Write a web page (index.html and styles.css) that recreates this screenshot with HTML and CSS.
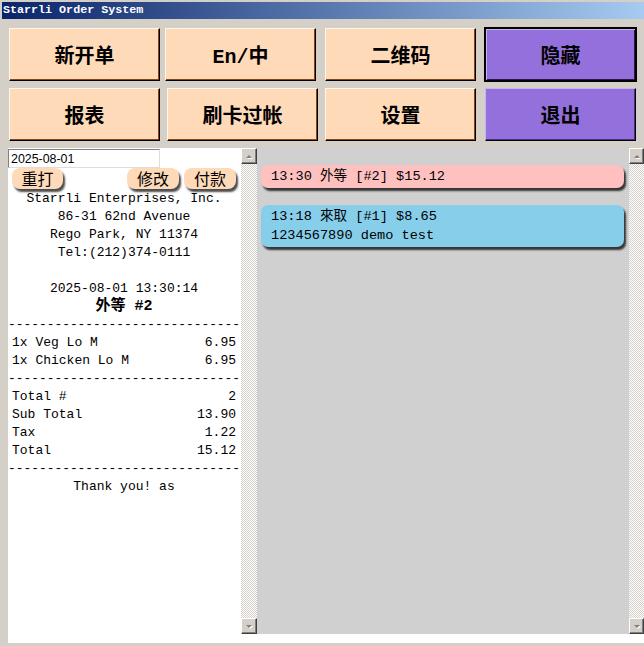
FILE: index.html
```html
<!DOCTYPE html>
<html lang="en">
<head>
    <meta charset="UTF-8">
    <title>Starrli Order System</title>
    <link rel="stylesheet" href="styles.css">
</head>
<body>
    <!-- Title Bar -->
    <div class="titlebar">Starrli Order System</div>

    <!-- Main Buttons -->
    <div class="toolbar">
        <button class="tool peach">新开单</button>
        <button class="tool peach">En/中</button>
        <button class="tool peach">二维码</button>
        <button class="tool purple default">隐藏</button>
        <button class="tool peach">报表</button>
        <button class="tool peach shift">刷卡过帐</button>
        <button class="tool peach">设置</button>
        <button class="tool purple">退出</button>
    </div>

    <!-- Workspace: receipt on the left, orders on the right -->
    <div class="workspace">
        <div class="receipt">
            <input class="date-field" type="text" value="2025-08-01">
            <div class="receipt-actions">
                <button class="pill">重打</button>
                <span class="spacer"></span>
                <button class="pill">修改</button>
                <button class="pill">付款</button>
            </div>
            <div class="receipt-body">
                <div class="line center">Starrli Enterprises, Inc.</div>
                <div class="line center">86-31 62nd Avenue</div>
                <div class="line center">Rego Park, NY 11374</div>
                <div class="line center">Tel:(212)374-0111</div>
                <div class="line">&nbsp;</div>
                <div class="line center">2025-08-01 13:30:14</div>
                <div class="line center big">外等 #2</div>
                <div class="line dashes">------------------------------</div>
                <div class="line row"><span>1x Veg Lo M</span><span>6.95</span></div>
                <div class="line row"><span>1x Chicken Lo M</span><span>6.95</span></div>
                <div class="line dashes">------------------------------</div>
                <div class="line row"><span>Total #</span><span>2</span></div>
                <div class="line row"><span>Sub Total</span><span>13.90</span></div>
                <div class="line row"><span>Tax</span><span>1.22</span></div>
                <div class="line row"><span>Total</span><span>15.12</span></div>
                <div class="line dashes">------------------------------</div>
                <div class="line center">Thank you! as</div>
            </div>
        </div>

        <div class="scrollbar">
            <div class="arrow"><svg width="12" height="12" viewBox="0 0 12 12"><polygon points="3,8 9,8 6,5" fill="#fff" transform="translate(1,1)"/><polygon points="3,8 9,8 6,5" fill="#808080"/></svg></div>
            <div class="track"></div>
            <div class="arrow"><svg width="12" height="12" viewBox="0 0 12 12"><polygon points="3,5 9,5 6,8" fill="#fff" transform="translate(1,1)"/><polygon points="3,5 9,5 6,8" fill="#808080"/></svg></div>
        </div>

        <div class="orders">
            <div class="order-card pink">13:30 外等 [#2] $15.12</div>
            <div class="order-card blue">13:18 來取 [#1] $8.65<br>1234567890 demo test</div>
        </div>

        <div class="scrollbar narrow">
            <div class="arrow"><svg width="12" height="12" viewBox="0 0 12 12"><polygon points="3,8 9,8 6,5" fill="#fff" transform="translate(1,1)"/><polygon points="3,8 9,8 6,5" fill="#808080"/></svg></div>
            <div class="track"></div>
            <div class="arrow"><svg width="12" height="12" viewBox="0 0 12 12"><polygon points="3,5 9,5 6,8" fill="#fff" transform="translate(1,1)"/><polygon points="3,5 9,5 6,8" fill="#808080"/></svg></div>
        </div>
    </div>
</body>
</html>
```

FILE: styles.css
```css
/* General Reset */
* {
    margin: 0;
    padding: 0;
    box-sizing: border-box;
}

body {
    width: 644px;
    height: 646px;
    overflow: hidden;
    background-color: #d4d0c8;
    font-family: "Liberation Mono", "Noto Sans CJK SC", monospace;
    color: #000;
}

/* Title Bar */
.titlebar {
    margin: 2px 0 0 2px;
    height: 17px;
    padding-left: 1px;
    background: linear-gradient(to right, #0a246a, #a6caf0);
    color: white;
    font-family: "Liberation Mono", monospace;
    font-weight: bold;
    font-size: 11.7px;
    line-height: 17px;
}

/* Main Buttons */
.toolbar {
    display: grid;
    grid-template-columns: 156px 160px 160px 151px;
    grid-auto-rows: 53px;
    row-gap: 7px;
    padding: 9px 0 0 9px;
}

.tool {
    width: 151px;
    height: 53px;
    font-family: "Liberation Mono", "Noto Sans CJK SC", monospace;
    font-weight: bold;
    font-size: 20px;
    color: #000;
    cursor: pointer;
}

.tool.shift {
    margin-left: 2px;
}

.peach {
    background-color: #ffdab9;
    border-top: 1px solid #fff6ec;
    border-left: 1px solid #fff6ec;
    border-right: 1px solid #000;
    border-bottom: 1px solid #000;
    box-shadow: inset -1px -1px 0 #8b4513;
}

.purple {
    background-color: #9370db;
    border-top: 1px solid #c4b4f0;
    border-left: 1px solid #c4b4f0;
    border-right: 1px solid #000;
    border-bottom: 1px solid #000;
    box-shadow: inset -1px -1px 0 #4b2c8c;
}

.purple.default {
    outline: 1px solid #000;
    outline-offset: 0;
    border-top-color: #000;
    border-left-color: #000;
    box-shadow: inset 1px 1px 0 #c4b4f0, inset -1px -1px 0 #2a1650;
}

/* Workspace */
.workspace {
    display: flex;
    margin: 7px 0 0 8px;
    height: 495px;
    padding-bottom: 9px;
    background: white;
}

/* Receipt */
.receipt {
    width: 233px;
    overflow: hidden;
    background: white;
}

.date-field {
    display: block;
    width: 152px;
    height: 19px;
    margin-top: 1px;
    padding: 0 2px;
    border-top: 1px solid #808080;
    border-left: 1px solid #808080;
    border-right: 1px solid #e0ddd6;
    border-bottom: 1px solid #e0ddd6;
    font-family: "Liberation Sans", sans-serif;
    font-size: 12.4px;
    color: #000;
    outline: none;
}

.receipt-actions {
    display: flex;
    gap: 5px;
    height: 21px;
    margin: 0 5px 1px 4px;
    position: relative;
    z-index: 1;
}

.receipt-actions .spacer {
    flex: 1;
}

.pill {
    height: 21px;
    width: 52px;
    background: #ffdab9;
    border: none;
    border-radius: 8px;
    box-shadow: 2px 3px 2px rgba(0, 0, 0, 0.7);
    font-family: "Noto Sans CJK SC", sans-serif;
    font-size: 16px;
    line-height: 21px;
    color: #000;
}

.pill:first-child {
    width: 51px;
}

.receipt-body {
    font-size: 13px;
    line-height: 18px;
    padding: 0 5px 0 4px;
}

.line {
    height: 18px;
    white-space: nowrap;
}

.line.center {
    text-align: center;
}

.line.big {
    font-weight: bold;
    font-size: 15px;
}

.line.row {
    display: flex;
    justify-content: space-between;
}

.line.dashes {
    margin: 0 -5px 0 -4px;
    font-size: 12.9px;
}

/* Scrollbars */
.scrollbar {
    width: 16px;
    height: 486px;
    display: flex;
    flex-direction: column;
}

.scrollbar.narrow {
    width: 15px;
}

.scrollbar .track {
    flex: 1;
    background: repeating-conic-gradient(#d4d0c8 0% 25%, #ffffff 0% 50%) 0 0 / 2px 2px;
}

.scrollbar .arrow {
    height: 16px;
    display: flex;
    align-items: center;
    justify-content: center;
    background: #d4d0c8;
    border-top: 1px solid #fff;
    border-left: 1px solid #fff;
    border-right: 1px solid #404040;
    border-bottom: 1px solid #404040;
    box-shadow: inset -1px -1px 0 #808080;
}

/* Orders */
.orders {
    width: 372px;
    height: 486px;
    background: #d0d0d0;
    padding: 17px 5px 0 4px;
    display: flex;
    flex-direction: column;
    gap: 17px;
}

.order-card {
    padding: 2px 10px 2px;
    border-radius: 7px;
    font-size: 13.6px;
    line-height: 19px;
    box-shadow: 2px 3px 2px rgba(0, 0, 0, 0.75);
}

.order-card.pink {
    background: #ffc0c0;
}

.order-card.blue {
    background: #87ceeb;
}
```
